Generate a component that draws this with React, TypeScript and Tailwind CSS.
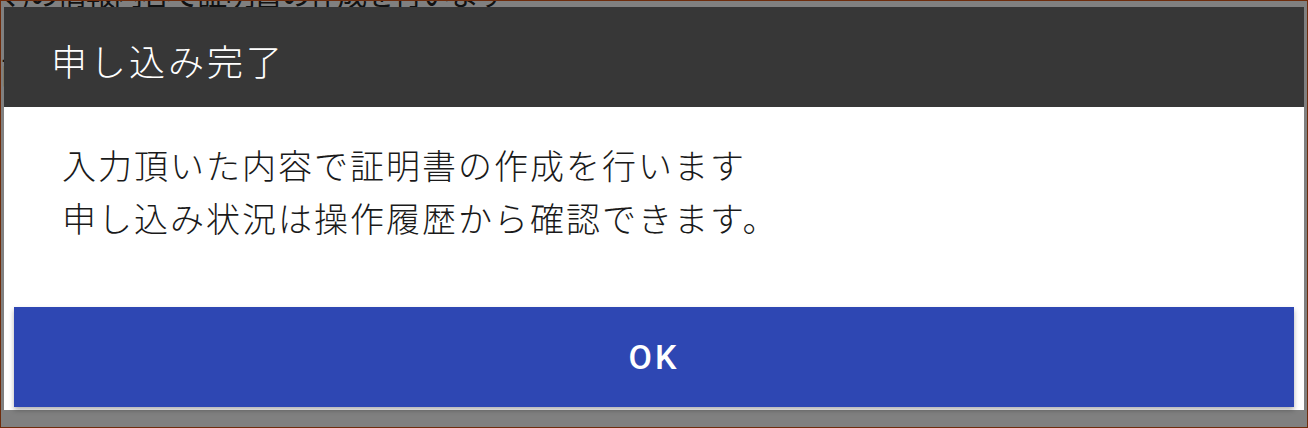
const font = "font-['Noto_Sans_CJK_JP','Noto_Sans',sans-serif]"

function BackdropText() {
  // page content peeking out from under the modal overlay
  return (
    <div className={`absolute inset-0 overflow-hidden text-[#111] ${font}`}>
      <p className="absolute left-[-8px] top-[-26px] whitespace-nowrap text-[30px] leading-[34px] tracking-[-2px]">
        く)の情報内容で証明書の作成を行います
      </p>
      <p className="absolute left-[-30px] top-[52px] whitespace-nowrap text-[30px] leading-[34px]">
        画面
      </p>
    </div>
  )
}

export default function App() {
  return (
    <div className="relative h-[428px] w-[1308px] overflow-hidden border border-[#6e2c0c] bg-[#808080]">
      <BackdropText />
      <div className="relative pl-[3px] pr-[3px] pt-[6px]">
        <div className="flex h-[403px] w-[1300px] flex-col bg-white">
          <div className="flex h-[100px] items-center bg-[#373737] px-[47px] pt-[5px]">
            <h2 className={`text-[36px] font-light leading-none tracking-[3px] text-white ${font}`}>申し込み完了</h2>
          </div>
          <div className={`flex-1 px-[58px] pt-[31px] text-[34px] font-light leading-[53px] tracking-[2px] text-[#1a1a1a] ${font}`}>
            <p>入力頂いた内容で証明書の作成を行います</p>
            <p>申し込み状況は操作履歴から確認できます。</p>
          </div>
          <div className="px-[10px] pb-[3px]">
            <button className="flex h-[100px] w-full items-center justify-center bg-[#2e47b3] text-[34px] font-medium tracking-[3px] text-white shadow-[0_3px_5px_rgba(0,0,0,0.3)] font-['Roboto',sans-serif]">
              OK
            </button>
          </div>
        </div>
      </div>
    </div>
  )
}
